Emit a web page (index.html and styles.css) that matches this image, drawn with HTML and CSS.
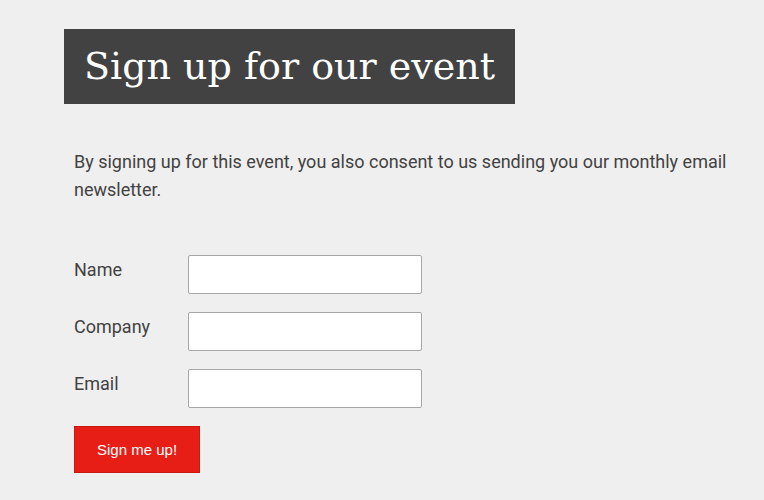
FILE: index.html
```html
<!DOCTYPE html>
<html lang="en">
<head>
<meta charset="utf-8">
<meta name="viewport" content="width=device-width, initial-scale=1">
<title>Sign up for our event</title>
<link rel="stylesheet" href="styles.css">
</head>
<body>
<main class="page">
  <h1 class="title">Sign up for our event</h1>
  <div class="content">
    <p class="intro">By signing up for this event, you also consent to us sending you our monthly email newsletter.</p>
    <form class="form">
      <div class="field"><label for="name">Name</label><input id="name" type="text"></div>
      <div class="field"><label for="company">Company</label><input id="company" type="text"></div>
      <div class="field"><label for="email">Email</label><input id="email" type="email"></div>
      <button class="submit" type="submit">Sign me up!</button>
    </form>
  </div>
</main>
</body>
</html>
```
FILE: styles.css
```css
* { box-sizing: border-box; }

body {
  margin: 0;
  background: #efefef;
  color: #424242;
  font-family: Roboto, "Liberation Sans", sans-serif;
  font-size: 18px;
  line-height: 28px;
}

.page { padding: 29px 20px 27px 64px; }

.title {
  width: fit-content;
  margin: 0 0 44px;
  padding: 10px 20px;
  background: #424242;
  color: #fff;
  font-family: "Roboto Slab", "DejaVu Serif", serif;
  font-size: 38px;
  font-weight: 400;
  line-height: 55px;
}

.content { padding-left: 10px; }

.intro { margin: 0 0 51px; }

.form {
  display: flex;
  flex-direction: column;
  align-items: flex-start;
  gap: 18px;
}

.field {
  display: grid;
  grid-template-columns: 114px 234px;
  line-height: 30px;
}

.field input {
  height: 39px;
  padding: 0 10px;
  border: 1px solid #a6a6a6;
  border-radius: 2px;
  background: #fff;
  font: inherit;
}

.submit {
  height: 47px;
  padding: 0 22px;
  border: 1px solid #c91810;
  background: #e61e16;
  color: #fff;
  font-family: "Liberation Sans", Arial, sans-serif;
  font-size: 15px;
}
```
